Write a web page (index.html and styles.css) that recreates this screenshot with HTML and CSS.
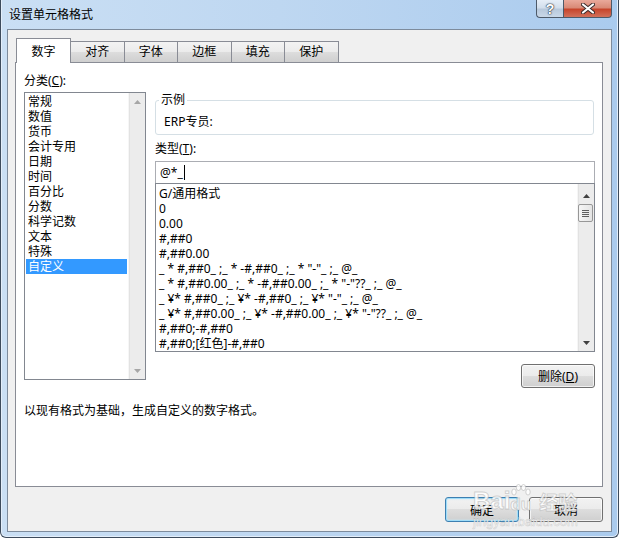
FILE: index.html
```html
<!DOCTYPE html>
<html lang="zh-CN">
<head>
    <meta charset="UTF-8">
    <title>设置单元格格式</title>
    <link rel="stylesheet" href="styles.css">
</head>
<body>

<div class="window">
    <div class="titlebar">
        <span class="title">设置单元格格式</span>
        <div class="caption-buttons">
            <span class="cap-btn help">?</span>
            <span class="cap-btn close">
                <svg viewBox="0 0 14 11" width="14" height="11">
                    <path d="M2 1.5 L12 9.5 M12 1.5 L2 9.5" stroke="#3a2a2a" stroke-width="4" stroke-linecap="round"/>
                    <path d="M2 1.5 L12 9.5 M12 1.5 L2 9.5" stroke="#fff" stroke-width="2.2" stroke-linecap="round"/>
                </svg>
            </span>
        </div>
    </div>

    <div class="client">
        <!-- 选项卡 -->
        <div class="tabs">
            <div class="tab active">数字</div>
            <div class="tab">对齐</div>
            <div class="tab">字体</div>
            <div class="tab">边框</div>
            <div class="tab">填充</div>
            <div class="tab">保护</div>
        </div>

        <div class="panel">
            <div class="panel-body">
                <!-- 分类 -->
                <div class="category-col">
                    <div class="field-label">分类(<u>C</u>):</div>
                    <div class="listbox">
                        <ul class="items">
                            <li>常规</li>
                            <li>数值</li>
                            <li>货币</li>
                            <li>会计专用</li>
                            <li>日期</li>
                            <li>时间</li>
                            <li>百分比</li>
                            <li>分数</li>
                            <li>科学记数</li>
                            <li>文本</li>
                            <li>特殊</li>
                            <li class="selected">自定义</li>
                        </ul>
                        <div class="scrollbar disabled">
                            <div class="sb-btn"><svg width="7" height="4" viewBox="0 0 7 4"><path d="M0 4 L3.5 0 L7 4Z"/></svg></div>
                            <div class="sb-track"></div>
                            <div class="sb-btn"><svg width="7" height="4" viewBox="0 0 7 4"><path d="M0 0 L7 0 L3.5 4Z"/></svg></div>
                        </div>
                    </div>
                </div>

                <!-- 类型 -->
                <div class="format-col">
                    <fieldset class="sample">
                        <legend>示例</legend>
                        <div>ERP专员:</div>
                    </fieldset>

                    <div class="field-label type-label">类型(<u>T</u>):</div>
                    <div class="type-input">@*_<span class="caret"></span></div>
                    <div class="type-list">
                        <ul class="items">
                            <li>G/通用格式</li>
                            <li>0</li>
                            <li>0.00</li>
                            <li>#,##0</li>
                            <li>#,##0.00</li>
                            <li>_ * #,##0_ ;_ * -#,##0_ ;_ * "-"_ ;_ @_</li>
                            <li>_ * #,##0.00_ ;_ * -#,##0.00_ ;_ * "-"??_ ;_ @_</li>
                            <li>_ ¥* #,##0_ ;_ ¥* -#,##0_ ;_ ¥* "-"_ ;_ @_</li>
                            <li>_ ¥* #,##0.00_ ;_ ¥* -#,##0.00_ ;_ ¥* "-"??_ ;_ @_</li>
                            <li>#,##0;-#,##0</li>
                            <li>#,##0;[红色]-#,##0</li>
                        </ul>
                        <div class="scrollbar">
                            <div class="sb-btn up"><svg width="7" height="4" viewBox="0 0 7 4"><path d="M0 4 L3.5 0 L7 4Z"/></svg></div>
                            <div class="sb-thumb"><span></span><span></span><span></span><span></span></div>
                            <div class="sb-track"></div>
                            <div class="sb-btn"><svg width="7" height="4" viewBox="0 0 7 4"><path d="M0 0 L7 0 L3.5 4Z"/></svg></div>
                        </div>
                    </div>

                    <button class="btn delete-btn">删除(<u>D</u>)</button>
                </div>
            </div>

            <p class="hint">以现有格式为基础，生成自定义的数字格式。</p>
        </div>

        <div class="dialog-buttons">
            <button class="btn default">确定</button>
            <button class="btn">取消</button>
        </div>
    </div>

    <!-- 水印 -->
    <div class="watermark">
        <div class="wm-logo">Bai<span class="wm-paw"><svg width="20" height="12" viewBox="0 0 20 12"><ellipse cx="3" cy="8" rx="2.2" ry="3"/><ellipse cx="7.5" cy="3.5" rx="2.2" ry="3"/><ellipse cx="12.5" cy="3.5" rx="2.2" ry="3"/><ellipse cx="17" cy="8" rx="2.2" ry="3"/></svg>du</span><span class="wm-cn">经验</span></div>
        <div class="wm-url">jingyan.baidu.com</div>
    </div>
</div>

</body>
</html>
```

FILE: styles.css
```css
* {
    box-sizing: border-box;
}

body {
    margin: 0;
    background: #fff;
    color: #000;
    font-family: "Noto Sans", "Noto Sans CJK SC", sans-serif;
    font-size: 12px;
}

ul {
    margin: 0;
    padding: 0;
    list-style: none;
}

u {
    text-decoration: underline;
    text-underline-offset: 1px;
}

/* 窗口外框 */
.window {
    position: relative;
    width: 619px;
    height: 538px;
    padding: 0 6px 5px;
    display: flex;
    flex-direction: column;
    border: 1px solid #3d4b5c;
    border-top: none;
    border-radius: 0 0 6px 6px;
    background: linear-gradient(90deg, #cadff4 0%, #bed7f1 45%, #aacbee 100%);
    box-shadow: inset 1px 0 0 #e3eefa, inset -1px 0 0 #e3eefa, inset 0 -1px 0 #e3eefa;
}

.titlebar {
    height: 29px;
    display: flex;
    justify-content: space-between;
    align-items: flex-start;
}

.title {
    padding: 7px 0 0 2px;
    line-height: 16px;
}

.caption-buttons {
    display: flex;
}

.cap-btn {
    height: 18px;
    display: flex;
    justify-content: center;
    align-items: center;
    border: 1px solid #4d5a69;
    border-top: none;
}

.cap-btn.help {
    width: 27px;
    border-right: none;
    border-radius: 0 0 0 4px;
    background: linear-gradient(#e6eef7 0%, #d3dfec 45%, #b8c9dc 55%, #c9d8e8 100%);
    color: #fff;
    font: bold 14px "Liberation Sans", sans-serif;
    text-shadow: 0 0 1px #2c3a4a, 0 0 1px #2c3a4a, 0 0 2px #2c3a4a;
}

.cap-btn.close {
    width: 49px;
    border-radius: 0 0 4px 0;
    background: linear-gradient(#e9a99b 0%, #d98a77 45%, #c7452c 55%, #d2705a 100%);
}

/* 客户区 */
.client {
    height: 503px;
    padding: 8px 8px 0 7px;
    display: flex;
    flex-direction: column;
    border: 1px solid #7d8b9c;
    background: #f0f0f0;
}

.tabs {
    display: flex;
    align-items: flex-end;
    padding-left: 1px;
}

.tab {
    width: 53.5px;
    height: 21px;
    line-height: 20px;
    text-align: center;
    border: 1px solid #898c95;
    border-bottom: none;
    border-left: none;
    background: linear-gradient(#f3f3f3 0%, #ebebeb 50%, #dddddd 50%, #cfcfcf 100%);
}

.tab.active {
    position: relative;
    z-index: 1;
    width: 55px;
    height: 25px;
    margin-bottom: -1px;
    padding-top: 3px;
    border-left: 1px solid #898c95;
    background: #fff;
}

.panel {
    height: 425px;
    padding: 10px 7px 0 8px;
    border: 1px solid #898c95;
    background: #fff;
}

.panel-body {
    display: flex;
    gap: 9px;
}

.field-label {
    line-height: 16px;
}

/* 分类列表 */
.category-col {
    width: 122px;
}

.category-col .field-label {
    margin-bottom: 3px;
}

.listbox {
    height: 288px;
    display: flex;
    border: 1px solid #828790;
}

.listbox .items {
    flex: 1;
    padding: 1px 1px 0;
}

.items li {
    height: 15px;
    line-height: 15px;
    padding-left: 2px;
    white-space: nowrap;
}

.items li.selected {
    background: #3399ff;
    color: #fff;
}

.scrollbar {
    width: 17px;
    display: flex;
    flex-direction: column;
    background: #ececec;
    border-left: 1px solid #f6f6f6;
    box-shadow: inset 1px 0 0 #e2e2e2;
}

.sb-btn {
    height: 17px;
    display: flex;
    justify-content: center;
    align-items: center;
}

.sb-btn svg {
    fill: #404040;
}

.scrollbar.disabled .sb-btn svg {
    fill: #a6a6a6;
}

.sb-btn.up {
    height: 20px;
    padding-top: 3px;
}

.sb-track {
    flex: 1;
}

.sb-thumb {
    height: 18px;
    margin-right: 1px;
    display: flex;
    flex-direction: column;
    justify-content: center;
    align-items: center;
    gap: 1px;
    border: 1px solid #979797;
    border-radius: 2px;
    background: linear-gradient(90deg, #f5f5f5, #e4e4e4);
}

.sb-thumb span {
    width: 7px;
    height: 1px;
    background: #5f5f5f;
}

/* 类型 */
.format-col {
    width: 440px;
    display: flex;
    flex-direction: column;
}

.sample {
    margin: 19px 1px 0 0;
    padding: 6px 8px 4px;
    border: 1px solid #d5dfe5;
    border-radius: 3px;
    line-height: 16px;
}

.sample legend {
    margin-left: -5px;
    padding: 0 2px;
    line-height: 16px;
}

.type-label {
    margin-top: 6px;
}

.type-input {
    height: 23px;
    margin-top: 4px;
    padding-left: 4px;
    line-height: 21px;
    border: 1px solid #abadb3;
    display: flex;
    align-items: center;
}

.caret {
    width: 1px;
    height: 15px;
    margin-left: 1px;
    background: #000;
}

.type-list {
    height: 169px;
    margin-top: -1px;
    display: flex;
    border: 1px solid #828790;
    overflow: hidden;
}

.type-list .items {
    flex: 1;
    padding: 2px 0 0 1px;
    overflow: hidden;
}

.btn {
    width: 74px;
    height: 25px;
    padding: 0;
    border: 1px solid #707070;
    border-radius: 3px;
    background: linear-gradient(#f2f2f2 0%, #ebebeb 50%, #dddddd 50%, #cfcfcf 100%);
    box-shadow: inset 0 0 0 1px rgba(255, 255, 255, 0.7);
    font: inherit;
    color: #000;
}

.delete-btn {
    align-self: flex-end;
    height: 24px;
    margin-top: 12px;
}

.hint {
    margin: 15px 0 0;
    line-height: 16px;
}

.dialog-buttons {
    display: flex;
    justify-content: flex-end;
    gap: 10px;
    margin-top: 10px;
}

.btn.default {
    border-color: #3c7fb1;
    box-shadow: inset 0 0 0 1px #9fdcf8, inset 0 0 2px 1px #c6ecfb;
}

/* 水印 */
.watermark {
    position: absolute;
    left: 472px;
    top: 484px;
    color: rgba(255, 255, 255, 0.85);
    -webkit-text-stroke: 1px rgba(150, 150, 150, 0.4);
    font-family: "Liberation Sans", sans-serif;
    pointer-events: none;
}

.wm-logo {
    display: flex;
    align-items: flex-end;
    font-size: 24px;
    font-weight: bold;
    line-height: 24px;
}

.wm-paw {
    display: inline-flex;
    flex-direction: column;
    align-items: center;
    font-size: 17px;
    line-height: 17px;
}

.wm-paw svg {
    fill: rgba(255, 255, 255, 0.85);
    stroke: rgba(150, 150, 150, 0.4);
}

.wm-cn {
    margin-left: 8px;
    font-family: "Noto Sans CJK SC", sans-serif;
    font-size: 19px;
    line-height: 22px;
}

.wm-url {
    margin-top: 2px;
    font-size: 13px;
    line-height: 14px;
    -webkit-text-stroke: 0.6px rgba(150, 150, 150, 0.4);
}
```
